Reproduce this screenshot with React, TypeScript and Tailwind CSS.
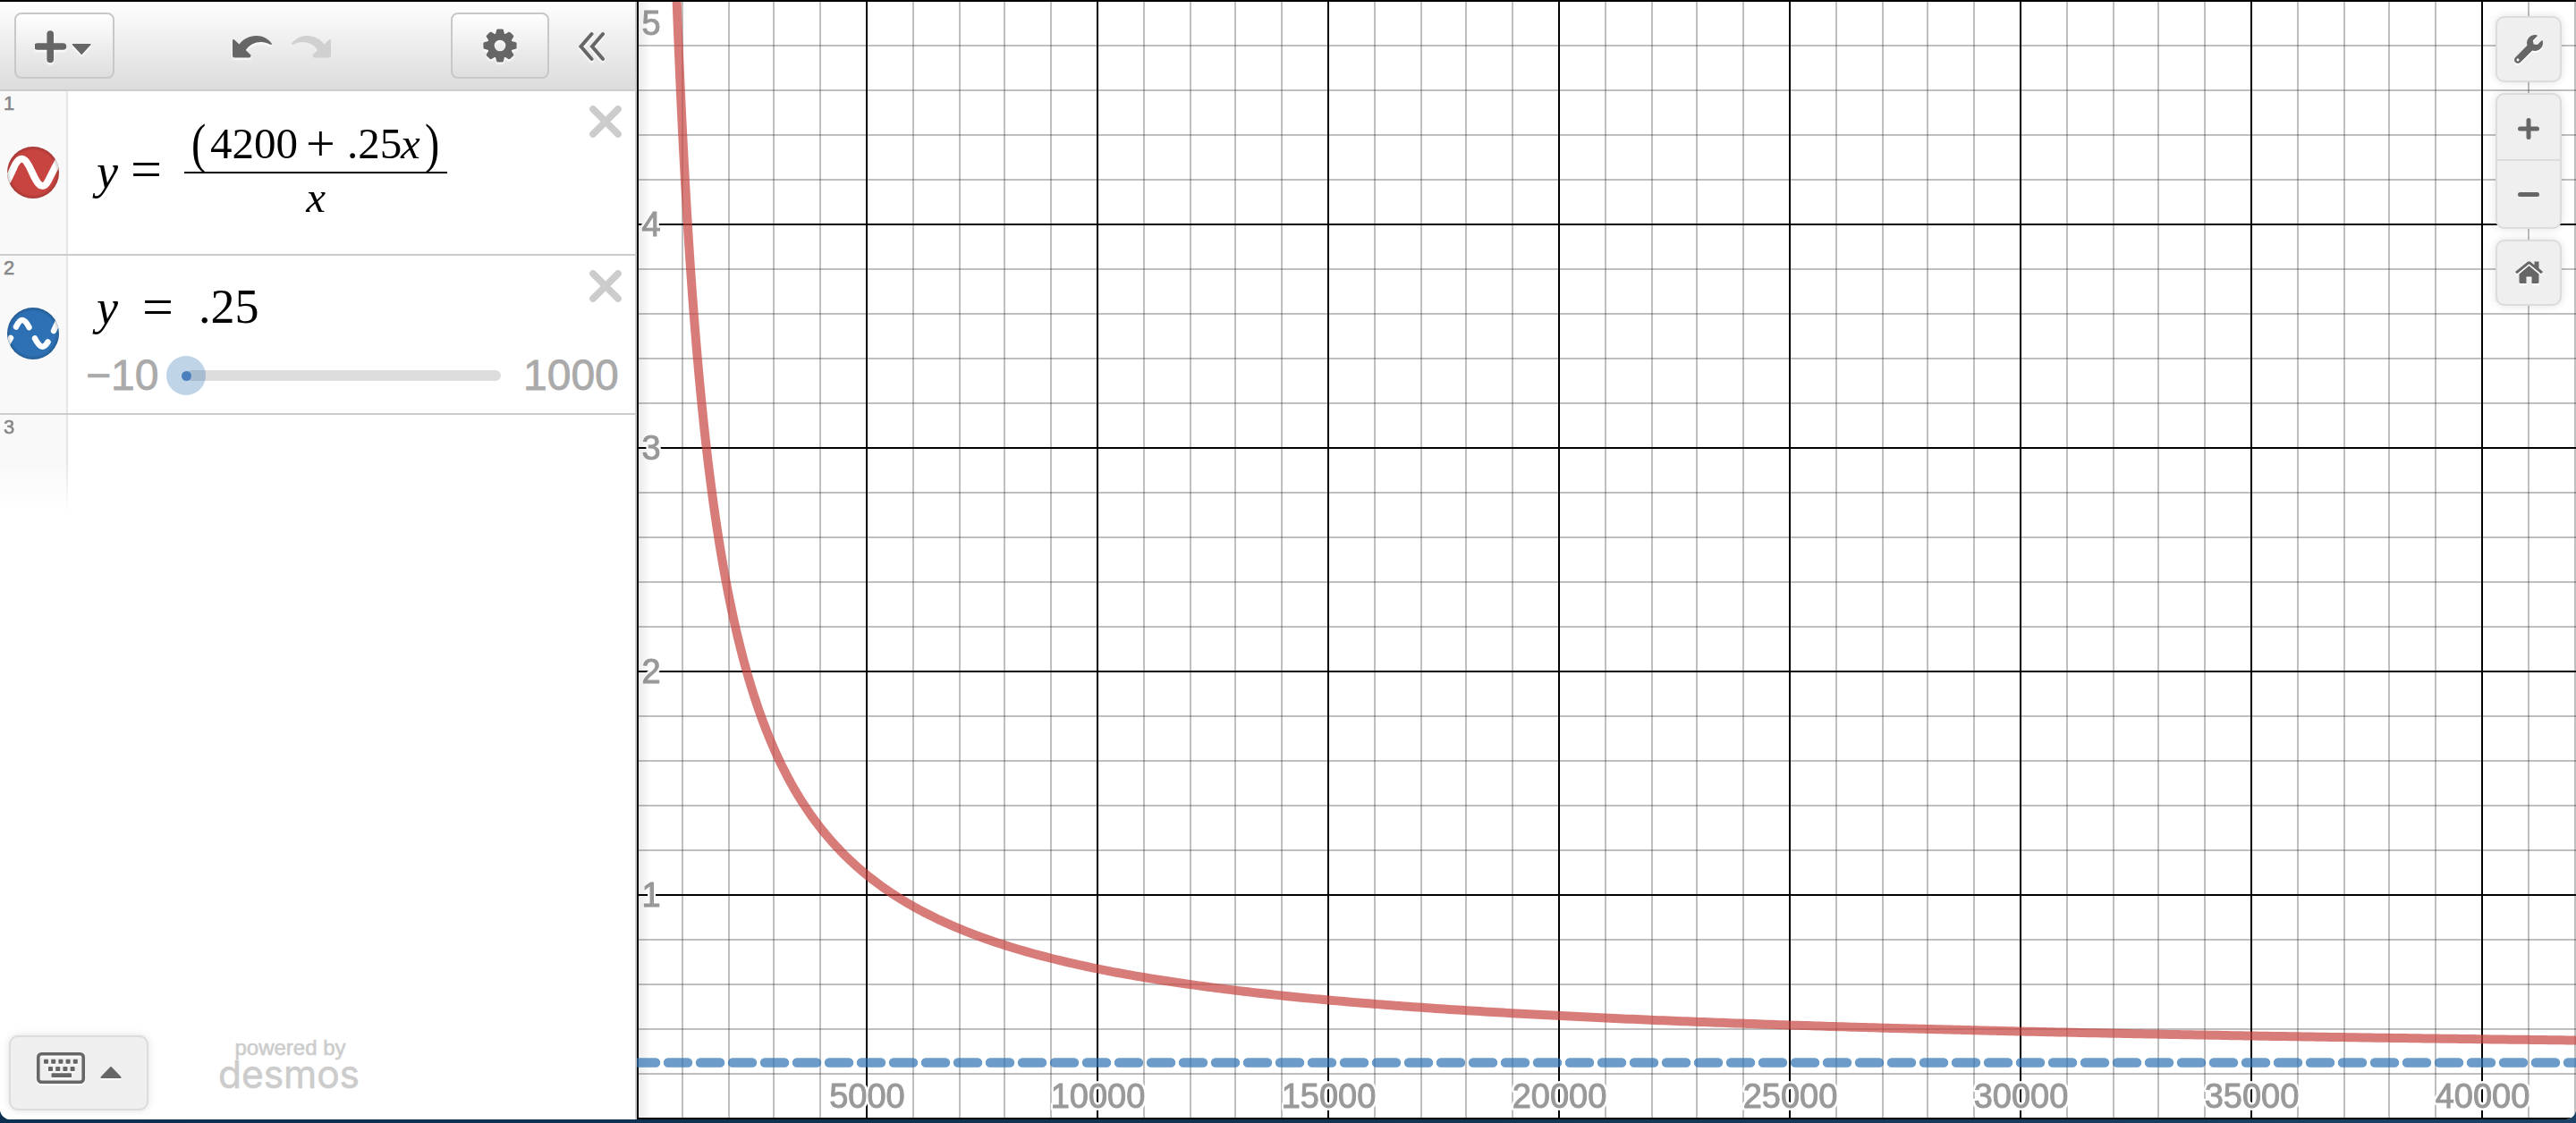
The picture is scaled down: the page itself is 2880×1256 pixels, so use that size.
import * as React from "react";
import { FaWrench } from "react-icons/fa";

// Graph space: origin at (711, 1251), one y unit is 250px, 1000 x units are 51.6px
const ORIGIN_X = 711;
const ORIGIN_Y = 1251;
const X_STEP = 51.6;
const Y_STEP = 50;

const snap = (v: number) => 2 * Math.floor(v / 2);

const columns = Array.from({ length: 42 }, (_, i) => i + 1);
const rows = Array.from({ length: 25 }, (_, i) => i + 1);
const xLabels = [5000, 10000, 15000, 20000, 25000, 30000, 35000, 40000];
const yLabels = [1, 2, 3, 4, 5];

function curvePath() {
    const points: string[] = [];
    for (let px = 755; px <= 2890; px += px < 1100 ? 1 : 5) {
        const x = ((px - ORIGIN_X) / X_STEP) * 1000;
        const y = (4200 + 0.25 * x) / x;
        points.push(`${px} ${(ORIGIN_Y - y * 250).toFixed(2)}`);
    }
    return `M${points.join("L")}`;
}

function Graph() {
    return (
        <svg className="block h-[1252px] w-[2168px]" viewBox="712 0 2168 1252">
            <defs>
                <linearGradient id="edge">
                    <stop offset="0" stopColor="#000" stopOpacity="0.08" />
                    <stop offset="1" stopColor="#000" stopOpacity="0" />
                </linearGradient>
            </defs>
            <rect x="712" y="0" width="2168" height="1252" fill="#fff" />
            <g fill="#000" fillOpacity="0.25">
                {columns.filter((i) => i % 5 !== 0).map((i) => (
                    <rect key={i} x={snap(ORIGIN_X + X_STEP * i)} y="0" width="2" height="1252" />
                ))}
                {rows.filter((i) => i % 5 !== 0).map((i) => (
                    <rect key={i} x="712" y={ORIGIN_Y - 1 - Y_STEP * i} width="2168" height="2" />
                ))}
            </g>
            <g fill="#000">
                {columns.filter((i) => i % 5 === 0).map((i) => (
                    <rect key={i} x={snap(ORIGIN_X + X_STEP * i)} y="0" width="2" height="1252" />
                ))}
                {rows.filter((i) => i % 5 === 0).map((i) => (
                    <rect key={i} x="712" y={ORIGIN_Y - 1 - Y_STEP * i} width="2168" height="2" />
                ))}
                <rect x="712" y="0" width="2" height="1252" />
                <rect x="712" y="1250" width="2168" height="2" />
            </g>
            <g
                className="[filter:drop-shadow(2px_0_0_#fff)_drop-shadow(-2px_0_0_#fff)_drop-shadow(0_2px_0_#fff)_drop-shadow(0_-2px_0_#fff)]"
                fill="#999"
                stroke="#999"
                strokeWidth="1"
                fontSize="38"
                fontFamily="'Liberation Sans', Arial, sans-serif"
            >
                {xLabels.map((v) => (
                    <text key={v} x={ORIGIN_X + (v / 1000) * X_STEP + 0.5} y="1238.5" textAnchor="middle">
                        {v}
                    </text>
                ))}
                {yLabels.map((v) => (
                    <text key={v} x="717.5" y={v === 5 ? 39 : ORIGIN_Y - v * 250 + 13}>
                        {v}
                    </text>
                ))}
            </g>
            <rect x="714" y="2" width="14" height="1248" fill="url(#edge)" />
            <path d={curvePath()} fill="none" stroke="#c74440" strokeOpacity="0.7" strokeWidth="10" />
            <path
                d="M711 1188.5H2900"
                fill="none"
                stroke="#2d70b3"
                strokeOpacity="0.7"
                strokeWidth="10.5"
                strokeLinecap="round"
                strokeDasharray="22 14"
            />
        </svg>
    );
}

function GearIcon() {
    return (
        <svg className="h-[38px] w-[38px] drop-shadow-[0_2px_1px_#fff]" viewBox="-19 -19 38 38" fill="#666">
            {[0, 45, 90, 135, 180, 225, 270, 315].map((a) => (
                <path
                    key={a}
                    transform={`rotate(${a})`}
                    d="M-5.5 -11L-3.8 -17.6Q-3.4 -18.6 -2.4 -18.6H2.4Q3.4 -18.6 3.8 -17.6L5.5 -11Z"
                />
            ))}
            <circle r="10.2" fill="none" stroke="#666" strokeWidth="7.8" />
        </svg>
    );
}

function ArrowIcon({ className }: { className: string }) {
    return (
        <svg className={className} viewBox="0 0 44 25">
            <path
                fill="currentColor"
                d="M0 5Q1 2.8 2.5 5L7.5 9.6C15 -1 34 -5 44 9Q44 10.6 41.5 9.6C33 4.5 21 7 14.8 16L20.5 21.8Q20.5 24.6 18 24.6H2Q0 24.6 0 22Z"
            />
        </svg>
    );
}

function CloseIcon() {
    return (
        <svg className="mr-[15px] h-9 w-9" viewBox="0 0 36 36">
            <path d="M4 4L32 32M32 4L4 32" stroke="#ccc" strokeWidth="7.8" strokeLinecap="round" />
        </svg>
    );
}

function Toolbar() {
    const button =
        "flex h-[74px] items-center justify-center rounded-lg border-2 border-[#c8c8c8] bg-gradient-to-b from-white to-[#dedede]";
    return (
        <header className="flex h-[100px] shrink-0 items-start border-b-2 border-[#ccc] bg-gradient-to-b from-[#fefefe] to-[#dcdcdc] pt-3 pl-4">
            <button className={`${button} w-28`}>
                <svg className="h-10 w-[66px] drop-shadow-[0_2px_1px_#fff]" viewBox="0 0 66 40">
                    <path d="M3 21H31.5M17.2 7V35.5" stroke="#666" strokeWidth="7.6" strokeLinecap="round" />
                    <path d="M42.5 18.8H61.8L52.2 29.2Z" fill="#666" stroke="#666" strokeWidth="1.5" strokeLinejoin="round" />
                </svg>
            </button>
            <ArrowIcon className="mt-[26px] ml-[132px] h-[25px] w-11 text-[#666] drop-shadow-[0_2px_1px_#fff]" />
            <ArrowIcon className="mt-[26px] ml-[22px] h-[25px] w-11 -scale-x-100 text-[#d0d0d0]" />
            <button className={`${button} ml-[134px] w-[110px]`}>
                <GearIcon />
            </button>
            <svg className="mt-[21px] ml-[33px] h-[34px] w-[30px] drop-shadow-[0_2px_1px_#fff]" viewBox="0 0 30 34">
                <path
                    d="M14.5 3L2.5 17L14.5 31M27 3L15 17L27 31"
                    fill="none"
                    stroke="#666"
                    strokeWidth="4"
                    strokeLinecap="round"
                />
            </svg>
        </header>
    );
}

function CurveBadge({ dashed }: { dashed?: boolean }) {
    const id = dashed ? "shade-blue" : "shade-red";
    return (
        <svg className="h-[58px] w-[58px]" viewBox="0 0 58 58">
            <defs>
                <clipPath id={`${id}-clip`}>
                    <circle cx="29" cy="29" r="29" />
                </clipPath>
                <radialGradient id={id}>
                    <stop offset="0.85" stopColor="#000" stopOpacity="0" />
                    <stop offset="1" stopColor="#000" stopOpacity="0.18" />
                </radialGradient>
            </defs>
            <circle cx="29" cy="29" r="29" fill={dashed ? "#2d70b3" : "#c74440"} />
            <g clipPath={`url(#${id}-clip)`} fill="none" stroke="#fff" strokeWidth="6.5" strokeLinecap="round">
                {dashed ? (
                    <path d="M10 21.5C15 11.5 19 11.5 24.5 22M31 34.5C37 46 41 46 45.5 38.5M52 26L58 13M0 41L4 34" />
                ) : (
                    <path
                        strokeWidth="8"
                        d="M-2 42C2 36 7 24 9 20C14 11.5 19 11.5 24 21C27 26 29 32 32 37C37 46 42 46 46 38C49 32 53 24 60 11"
                    />
                )}
            </g>
            <circle cx="29" cy="29" r="29" fill={`url(#${id})`} />
        </svg>
    );
}

interface RowProps {
    index: number;
    className: string;
    badge: React.ReactNode;
    children: React.ReactNode;
}

function RowNumber({ value }: { value: number }) {
    return (
        <span className="h-[42px] text-[22px] leading-[27px] text-[#888] [-webkit-text-stroke:0.6px_#888]">{value}</span>
    );
}

function ExpressionRow({ index, className, badge, children }: RowProps) {
    return (
        <div className={`flex shrink-0 border-b-2 border-[#ccc] ${className}`}>
            <div className="flex w-[76px] shrink-0 flex-col border-r-2 border-[#e6e6e6] bg-[#f9f9f9] pl-1">
                <RowNumber value={index} />
                {badge}
            </div>
            {children}
        </div>
    );
}

function FractionExpression() {
    return (
        <div className="flex flex-1 font-['Liberation_Serif',serif] text-[54px] leading-[60px] text-black">
            <i className="mt-[60px] ml-8 w-[38px]">y</i>
            <span className="mt-[57px] w-[60px] text-[62px]">=</span>
            <div className="mt-[29px] flex w-[294px] shrink-0 flex-col items-center text-[49px]">
                <div className="flex h-[61px] w-full whitespace-nowrap">
                    <span className="ml-2 w-[21px] scale-y-125">(</span>
                    <span className="w-[107px]">4200</span>
                    <span className="w-[46px] text-[58px]">+</span>
                    <span className="w-[60px]">.25</span>
                    <i className="w-[27px]">x</i>
                    <span className="scale-y-125">)</span>
                </div>
                <div className="h-0.5 w-full shrink-0 bg-black" />
                <i className="mt-0.5 leading-[50px]">x</i>
            </div>
        </div>
    );
}

function SliderExpression() {
    return (
        <div className="flex flex-1 flex-col text-black">
            <div className="flex pt-7 font-['Liberation_Serif',serif] text-[54px] leading-[60px]">
                <i className="ml-8 w-[51px]">y</i>
                <span className="-mt-px w-[63px] text-[62px]">=</span>
                <span className="-mt-px">.25</span>
            </div>
            <div className="mt-[18px] flex h-14 items-center text-[48px] leading-[56px] text-[#aaa] [-webkit-text-stroke:0.8px_#aaa]">
                <span className="ml-5 w-[90px]">−10</span>
                <div className="relative ml-[22px] h-3 w-[352px] rounded-full bg-[#ddd]">
                    <div className="absolute -top-4 -left-[22px] flex h-11 w-11 items-center justify-center rounded-full bg-[#2d70b3]/30">
                        <div className="h-[11px] w-[11px] rounded-full bg-[#4a80be]" />
                    </div>
                </div>
                <span className="ml-[25px]">1000</span>
            </div>
        </div>
    );
}

function KeypadButton() {
    return (
        <button className="flex h-[84px] w-[156px] items-start rounded-[10px] border-2 border-[#dcdcdc] bg-[#efefef] pt-[17px] pl-[29px] shadow-[0_0_10px_rgba(0,0,0,0.12)]">
            <svg className="h-9 w-24 overflow-visible drop-shadow-[0_2px_0_#fff]" viewBox="0 0 96 36">
                <rect x="1.8" y="1.8" width="50.4" height="31.4" rx="3.5" fill="none" stroke="#666" strokeWidth="3.6" />
                <g fill="#666">
                    {[0, 1, 2, 3, 4].map((i) => (
                        <rect key={i} x={8 + i * 8.2} y="7.8" width="5" height="5" rx="0.8" />
                    ))}
                    {[0, 1, 2, 3].map((i) => (
                        <rect key={i} x={13 + i * 8.2} y="16" width="5" height="5" rx="0.8" />
                    ))}
                    <rect x="16.5" y="23.3" width="22.5" height="4.8" rx="0.8" />
                    <path d="M72.5 28L83 17L93.5 28Z" stroke="#666" strokeWidth="2" strokeLinejoin="round" />
                </g>
            </svg>
        </button>
    );
}

function Sidebar() {
    return (
        <aside className="flex h-full w-[712px] shrink-0 flex-col border-r-2 border-[#ccc] bg-white">
            <Toolbar />
            <ExpressionRow index={1} className="h-[184px]" badge={<div className="mt-5 ml-1"><CurveBadge /></div>}>
                <FractionExpression />
                <div className="pt-4"><CloseIcon /></div>
            </ExpressionRow>
            <ExpressionRow index={2} className="h-[178px]" badge={<div className="mt-4 ml-1"><CurveBadge dashed /></div>}>
                <SliderExpression />
                <div className="-ml-[51px] pt-4"><CloseIcon /></div>
            </ExpressionRow>
            <div className="flex h-[110px] w-[76px] border-r-2 border-[#e6e6e6] bg-[#f9f9f9] pl-1 [mask-image:linear-gradient(#000_50%,transparent)]">
                <RowNumber value={3} />
            </div>
            <footer className="mt-auto flex items-end pb-2.5 pl-2.5">
                <KeypadButton />
                <svg className="mb-5 ml-[74px] h-[72px] w-[168px] overflow-visible" viewBox="240 1150 168 72" fill="#ccc" stroke="#ccc">
                    <text x="262.5" y="1179.5" fontSize="24" textLength="124" fontFamily="'Liberation Sans', sans-serif" strokeWidth="0.6">
                        powered by
                    </text>
                    <text x="244" y="1216.5" fontSize="43" textLength="158" lengthAdjust="spacingAndGlyphs" fontFamily="Inter, sans-serif" strokeWidth="0.6">
                        desmos
                    </text>
                </svg>
            </footer>
        </aside>
    );
}

function GraphControls() {
    const box = "flex w-[74px] flex-col rounded-[10px] border-2 border-[#dcdcdc] bg-[#efefef] shadow-[0_0_10px_rgba(0,0,0,0.12)]";
    return (
        <div className="absolute top-4 right-4 flex flex-col gap-3">
            <button className={`${box} h-[74px] items-center justify-center`}>
                <FaWrench className="h-8 w-8 text-[#666] drop-shadow-[0_2px_0_#fff]" />
            </button>
            <div className={`${box} h-[152px]`}>
                <button className="flex h-[74px] items-center justify-center border-b-2 border-[#dcdcdc]">
                    <svg className="mt-1 h-6 w-6" viewBox="0 0 24 24">
                        <path d="M2.5 12H21.5M12 2.5V21.5" stroke="#666" strokeWidth="5" strokeLinecap="round" />
                    </svg>
                </button>
                <button className="flex h-[74px] items-center justify-center">
                    <svg className="h-6 w-6" viewBox="0 0 24 24">
                        <path d="M2.5 12.5H21.5" stroke="#666" strokeWidth="5" strokeLinecap="round" />
                    </svg>
                </button>
            </div>
            <button className={`${box} h-[74px] items-center justify-center`}>
                <svg className="h-[26px] w-[31px] overflow-visible drop-shadow-[0_2px_0_#fff]" viewBox="0 0 31 26" fill="#666">
                    <path d="M21.5 0.5H26.5V8L31 12L29 14.3L15.5 3.2L2 14.3L0 12L14 0.8Q15.5 -0.4 17 0.8L21.5 4.5Z" />
                    <path d="M15.5 5.2L26.5 14.5V23.5Q26.5 25 25 25H18.5V17.5H12.5V25H6Q4.5 25 4.5 23.5V14.5Z" />
                </svg>
            </button>
        </div>
    );
}

export default function App() {
    return (
        <div className="h-[1256px] w-[2880px] overflow-hidden bg-gradient-to-r from-[#0b3052] via-[#123450] to-[#1b4266] font-['Liberation_Sans',Arial,sans-serif]">
            <div className="relative flex h-[1252px] overflow-hidden rounded-b-[12px] border-t-2 border-black bg-white">
                <Sidebar />
                <main className="-mt-0.5 h-[1252px]">
                    <Graph />
                </main>
                <GraphControls />
                <div className="absolute -top-0.5 right-0 left-0 h-0.5 bg-black" />
            </div>
        </div>
    );
}
